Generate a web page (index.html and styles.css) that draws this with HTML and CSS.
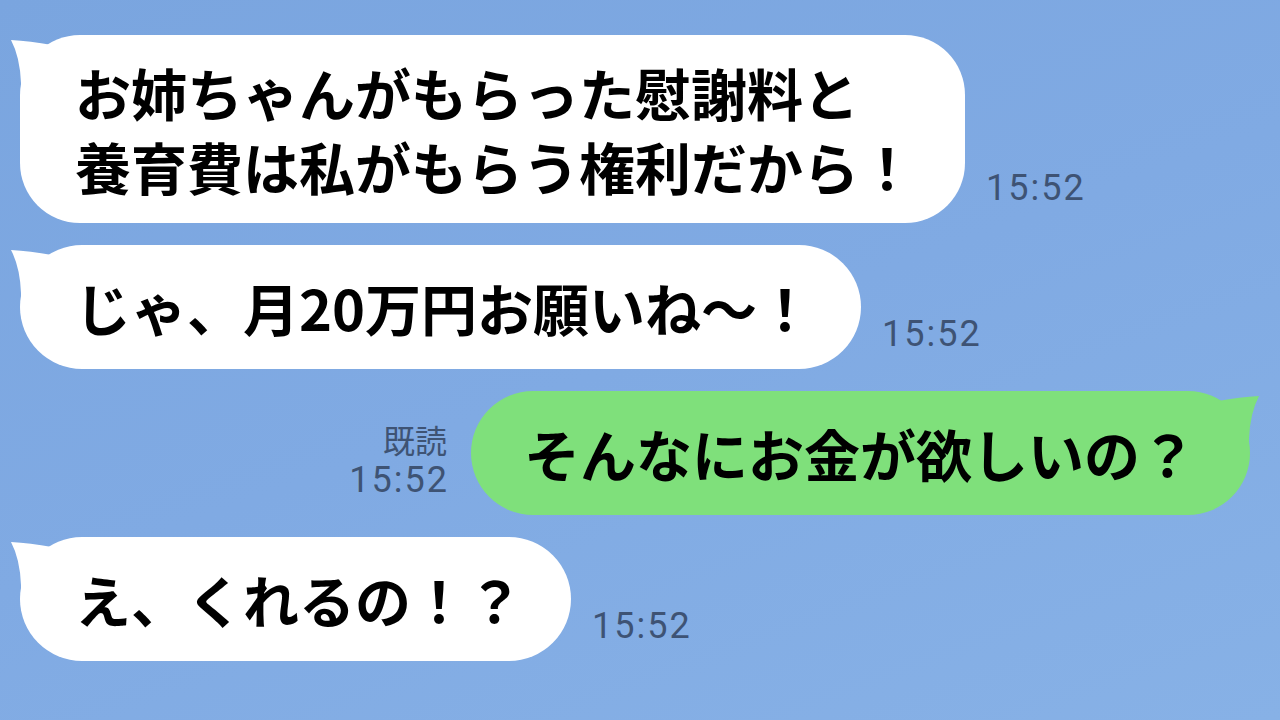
FILE: index.html
```html
<!DOCTYPE html>
<html lang="ja">
<head>
  <meta charset="UTF-8">
  <meta name="viewport" content="width=device-width, initial-scale=1.0">
  <title>トーク</title>
  <link rel="stylesheet" href="styles.css">
</head>
<body>

  <main class="chat">

    <div class="row">
      <div class="bubble bubble-left multi">
        <svg class="tail" viewBox="0 0 70 70" width="70" height="70"><path d="M11,5 Q30,6 52,10 L70,10 L70,70 L21,70 L21,48 Q20,22 11,5 Z"/></svg>
        <p>お姉ちゃんがもらった慰謝料と<br>養育費は私がもらう権利だから！</p>
      </div>
      <span class="time">15:52</span>
    </div>

    <div class="row">
      <div class="bubble bubble-left">
        <svg class="tail" viewBox="0 0 70 70" width="70" height="70"><path d="M11,5 Q30,6 52,10 L70,10 L70,70 L21,70 L21,48 Q20,22 11,5 Z"/></svg>
        <p>じゃ、月20万円お願いね〜！</p>
      </div>
      <span class="time">15:52</span>
    </div>

    <div class="row row-right">
      <div class="meta">
        <span class="read">既読</span>
        <span class="time">15:52</span>
      </div>
      <div class="bubble bubble-right">
        <svg class="tail" viewBox="0 0 70 70" width="70" height="70"><path d="M11,5 Q30,6 52,10 L70,10 L70,70 L21,70 L21,48 Q20,22 11,5 Z"/></svg>
        <p>そんなにお金が欲しいの？</p>
      </div>
    </div>

    <div class="row">
      <div class="bubble bubble-left">
        <svg class="tail" viewBox="0 0 70 70" width="70" height="70"><path d="M11,5 Q30,6 52,10 L70,10 L70,70 L21,70 L21,48 Q20,22 11,5 Z"/></svg>
        <p>え、くれるの！？</p>
      </div>
      <span class="time">15:52</span>
    </div>

  </main>

</body>
</html>
```

FILE: styles.css
```css
* {
  margin: 0;
  padding: 0;
  box-sizing: border-box;
}

html, body {
  height: 100%;
}

body {
  background: linear-gradient(160deg, #7aa5df 0%, #80aae3 50%, #87b1e6 100%);
  font-family: 'Noto Sans CJK JP', sans-serif;
  overflow: hidden;
}

.chat {
  display: flex;
  flex-direction: column;
  gap: 22px;
  padding: 35px 30px 0 20px;
}

.row {
  display: flex;
  align-items: flex-end;
  gap: 21px;
}

.row-right {
  justify-content: flex-end;
  gap: 22px;
}

.bubble {
  position: relative;
  border-radius: 62px;
  padding: 25px 48px 25px 55px;
}

.bubble p {
  position: relative;
  font-size: 56px;
  font-weight: 700;
  line-height: 74px;
  color: #000;
  white-space: nowrap;
}

.bubble.multi {
  padding: 20px 50px 20px 55px;
  border-radius: 60px;
}

.bubble-left {
  background-color: #fff;
}

.bubble-left .tail {
  position: absolute;
  left: -20px;
  top: 0;
  fill: #fff;
}

.bubble-right {
  background-color: #7fe07b;
  padding: 25px 54px 25px 53px;
}

.bubble-right .tail {
  position: absolute;
  right: -20px;
  top: 0;
  fill: #7fe07b;
  transform: scaleX(-1);
}

.time {
  font-family: 'Roboto', sans-serif;
  font-size: 36px;
  letter-spacing: 2px;
  line-height: 1;
  color: #3e5374;
  margin-bottom: 17px;
}

.meta {
  display: flex;
  flex-direction: column;
  align-items: flex-end;
  gap: 7px;
  margin-bottom: 17px;
}

.meta .time {
  margin-bottom: 0;
}

.read {
  font-size: 32px;
  line-height: 1;
  color: #3e5374;
  margin-right: 2px;
}
```
